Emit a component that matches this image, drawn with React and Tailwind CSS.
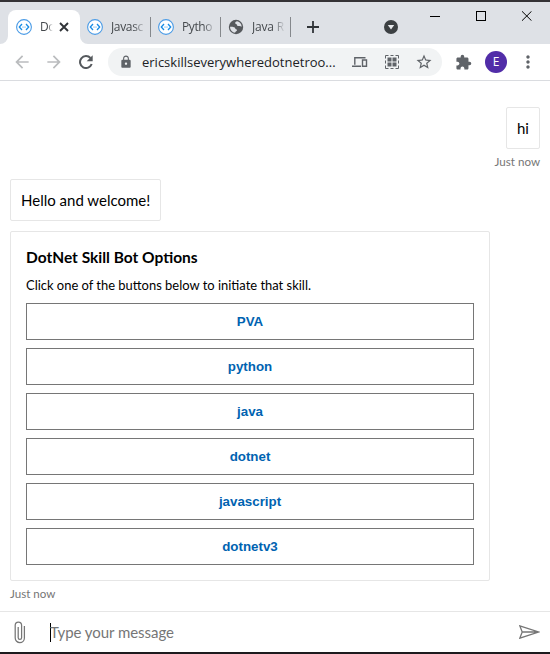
import React from "react";
import { MdArrowBack, MdArrowForward, MdLock, MdStarBorder, MdExtension, MdMoreVert } from "react-icons/md";

const ui = "font-['Open_Sans','Noto_Sans',sans-serif]";
const chatFont = "font-['Lato','Open_Sans',sans-serif]";

function BotIcon() {
  return (
    <svg width="16" height="16" viewBox="0 0 16 16" fill="none" className="shrink-0">
      <circle cx="8" cy="8" r="7.4" fill="#fff" stroke="#4a9be6" strokeWidth="1.1" />
      <path d="M6 5 3.3 8 6 11M10 5 12.7 8 10 11" stroke="#168be4" strokeWidth="1.3" />
      <circle cx="7" cy="8" r=".55" fill="#168be4" />
      <circle cx="9" cy="8" r=".55" fill="#168be4" />
    </svg>
  );
}

function GlobeIcon() {
  return (
    <svg width="16" height="16" viewBox="0 0 16 16" className="shrink-0">
      <circle cx="8" cy="8" r="7.2" fill="#56595d" />
      <path d="M9.2 2.3c-1.3.4-2.200 1-2 2 .2.9 1.500.6 1.700 1.500.1.900.9 1.400 1.900 1.200 1-.2 2 .1 2.900.8A6 6 0 0 0 9.200 2.300ZM2 7.700c1.600-.1 3.600-.1 4.700.7.800.6.3 1.500 1.300 1.800 1.100.2 1.300 1 .6 1.700-.6.500-1.500.7-1.500 1.900A6 6 0 0 1 2 7.700Z" fill="#dee1e6" />
    </svg>
  );
}

function TabLabel({ children, className }) {
  return (
    <span className={"whitespace-nowrap text-[12px] leading-4 text-[#45494d] " + className}>
      {children}
    </span>
  );
}

function TabStrip() {
  return (
    <div className={"flex h-[42px] bg-[#dee1e6] pl-2 " + ui}>
      <div className="relative mt-2 flex h-[34px] w-[72px] items-center rounded-t-lg bg-white pl-2">
        <svg className="absolute bottom-0 -left-2" width="8" height="8"><path d="M8 0v8H0a8 8 0 0 0 8-8Z" fill="#fff" /></svg>
        <svg className="absolute bottom-0 -right-2" width="8" height="8"><path d="M0 0v8h8a8 8 0 0 1-8-8Z" fill="#fff" /></svg>
        <BotIcon />
        <TabLabel className="ml-[8px] w-[17px] tracking-[-0.4px] [mask-image:linear-gradient(to_right,black_45%,transparent_75%)]">Do</TabLabel>
        <svg className="ml-[2px]" width="10" height="10" viewBox="0 0 10 10"><path d="m1 1 8 8M9 1 1 9" stroke="#303438" strokeWidth="1.9" /></svg>
      </div>
      <div className="mt-2 flex h-[34px] items-center">
        <div className="flex h-5 w-[71px] items-center border-r border-[#85888c] pl-[7px]">
          <BotIcon /><TabLabel className="ml-2 w-[38px] tracking-[-0.35px] [mask-image:linear-gradient(to_right,black_58%,transparent_92%)]">Javasc</TabLabel>
        </div>
        <div className="flex h-5 w-[70px] items-center border-r border-[#85888c] pl-[7px]">
          <BotIcon /><TabLabel className="ml-2 w-[34px] tracking-[-0.4px] [mask-image:linear-gradient(to_right,black_62%,transparent)]">Pytho</TabLabel>
        </div>
        <div className="flex h-5 w-[70px] items-center border-r border-[#85888c] pl-[7px]">
          <GlobeIcon /><TabLabel className="ml-2 w-[34px] tracking-[-0.2px] [mask-image:linear-gradient(to_right,black_60%,transparent_98%)]">Java R</TabLabel>
        </div>
        <svg className="ml-4" width="12" height="12"><path d="M6 0v12M0 6h12" stroke="#303438" strokeWidth="1.8" /></svg>
        <svg className="ml-[65px]" width="14" height="14"><circle cx="7" cy="7" r="7" fill="#3c4043" /><path d="M3.800 5h6.400L7 9.600Z" fill="#e8eaed" /></svg>
      </div>
      <svg className="mt-[9px] ml-8" width="102" height="10" fill="none" stroke="#000" strokeWidth="1">
        <path d="M0 5.500h10" shapeRendering="crispEdges" />
        <path d="M46.500.5h9v9h-9z" shapeRendering="crispEdges" />
        <path d="m92 .3 9.500 9.400M101.500.3 92 9.700" />
      </svg>
    </div>
  );
}

function Toolbar() {
  return (
    <div className={"flex h-[37px] items-center border-b border-[#dadce0] bg-white pl-3 text-[#5f6368] " + ui}>
      <MdArrowBack size={20} className="shrink-0 text-[#babcbe]" />
      <MdArrowForward size={20} className="ml-3 shrink-0 text-[#babcbe]" />
      <svg className="ml-[15px] shrink-0" width="14" height="14" viewBox="0 0 14 14">
        <path d="M11.500 3A6 6 0 1 0 12.700 9" fill="none" stroke="#55595d" strokeWidth="2" />
        <path d="M13.700.2v6H7.700Z" fill="#55595d" />
      </svg>
      <div className="ml-[15px] flex h-7 w-[334px] shrink-0 items-center rounded-full bg-[#f1f3f4] pl-[11px]">
        <MdLock size={14} />
        <span className="ml-[9px] w-[200px] whitespace-nowrap text-[13px] leading-5 text-[#202124]">ericskillseverywheredotnetroo...</span>
        <svg className="ml-[10px]" width="16" height="12" viewBox="0 0 16 12" fill="none" stroke="#5f6368" strokeWidth="1.4">
          <path d="M13.500 1.700H2.800v7M0 10.200h9" />
          <path d="M10.500 4h4v6.200h-4z" />
        </svg>
        <svg className="ml-[17px]" width="14" height="14" viewBox="0 0 14 14" fill="none" stroke="#5f6368">
          <path d="M.5 3.500v-3h3M5.500.5h3M10.500.5h3v3M13.500 5.500v3M13.500 10.500v3h-3M8.500 13.500h-3M3.500 13.500h-3v-3M.5 8.500v-3" strokeWidth="1" />
          <path d="M2.500 2.500h4v4h-4zM7.500 2.500h4v4h-4zM2.500 7.500h4v4h-4zM7.500 7.500h4v4h-4z" fill="#5f6368" stroke="none" />
        </svg>
        <MdStarBorder size={18} className="ml-4" />
      </div>
      <MdExtension size={17} className="ml-[13px] shrink-0" />
      <div className="ml-[13px] flex size-[22px] shrink-0 items-center justify-center rounded-full bg-[#512da8] text-[12px] text-white">E</div>
      <MdMoreVert size={20} className="ml-[11px] shrink-0" />
    </div>
  );
}

const skills = ["PVA", "python", "java", "dotnet", "javascript", "dotnetv3"];

export default function App() {
  return (
    <div className="flex h-[654px] w-[550px] flex-col overflow-hidden border-t-2 border-b-2 border-t-[#343235] border-b-[#1d1b1e] bg-white">
      <TabStrip />
      <Toolbar />
      <main className={"flex flex-1 flex-col px-[10px] pt-[26px] text-black " + chatFont}>
        <div className="flex h-[42px] w-[34px] items-center justify-center self-end rounded-[2px] border border-[#e6e6e6] text-[15px]">hi</div>
        <div className="mt-[5px] self-end text-[11.6px] leading-4 text-[#767676]">Just now</div>
        <div className="mt-[9px] flex h-[42px] w-[151px] items-center rounded-[2px] border border-[#e6e6e6] pl-[10px] text-[15px] whitespace-nowrap">Hello and welcome!</div>
        <section className="mt-[10px] h-[350px] w-[480px] rounded-[2px] border border-[#e6e6e6] px-[15px] pt-[14px]">
          <h1 className="text-[15.5px] leading-[22px] font-bold">DotNet Skill Bot Options</h1>
          <p className="mt-[8px] text-[12.95px] leading-[18px]">Click one of the buttons below to initiate that skill.</p>
          <div className="mt-[9px] flex flex-col gap-2">
            {skills.map((skill) => (
              <button key={skill} className="h-[37px] border border-[#767676] bg-white font-['Liberation_Sans',sans-serif] text-[13.33px] font-bold text-[#0063b1]">{skill}</button>
            ))}
          </div>
        </section>
        <div className="mt-[5px] text-[11.6px] leading-4 text-[#767676]">Just now</div>
      </main>
      <footer className={"flex h-[41px] items-center border-t border-[#e6e6e6] pl-[14px] text-[#767676] " + chatFont}>
        <svg width="12" height="23" viewBox="0 0 12 23" fill="none" stroke="#767676" strokeWidth="1.25">
          <path d="M10.400 5v12a4.600 4.600 0 0 1-9.200 0V4.200a3.200 3.200 0 0 1 6.400 0v12.600a1.700 1.700 0 0 1-3.400 0V6" />
        </svg>
        <div className="ml-6 flex h-[19px] items-center border-l border-black text-[15px] tracking-[-0.05px] whitespace-nowrap"><span className="-ml-px">Type your message</span></div>
        <svg className="ml-auto mr-[10px]" width="21" height="14" viewBox="0 0 21 14" fill="none" stroke="#767676" strokeWidth="1.3">
          <path d="M.8.8 19.500 7 .8 13.200 3.200 7ZM3.200 7h15" />
        </svg>
      </footer>
    </div>
  );
}
